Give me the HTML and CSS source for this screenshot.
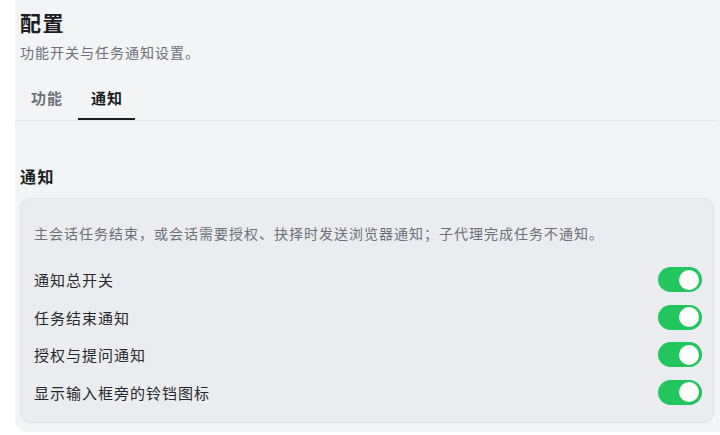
FILE: index.html
```html
<!DOCTYPE html>
<html lang="zh">
<head>
<meta charset="utf-8">
<link rel="stylesheet" href="styles.css">
</head>
<body>
<div class="panel">
  <h1 class="title">配置</h1>
  <p class="subtitle">功能开关与任务通知设置。</p>
  <div class="tabs">
    <div class="tab">功能</div>
    <div class="tab active">通知</div>
  </div>
  <h2 class="section">通知</h2>
  <div class="card">
    <p class="desc">主会话任务结束，或会话需要授权、抉择时发送浏览器通知；子代理完成任务不通知。</p>
    <div class="row"><span>通知总开关</span><span class="toggle on"><span class="knob"></span></span></div>
    <div class="row"><span>任务结束通知</span><span class="toggle on"><span class="knob"></span></span></div>
    <div class="row"><span>授权与提问通知</span><span class="toggle on"><span class="knob"></span></span></div>
    <div class="row"><span>显示输入框旁的铃铛图标</span><span class="toggle on"><span class="knob"></span></span></div>
  </div>
</div>
</body>
</html>
```

FILE: styles.css
```css
* { box-sizing: border-box; }
html, body { margin: 0; padding: 0; background: #ffffff; }
body {
  font-family: "Noto Sans CJK SC", "Noto Sans", sans-serif;
  color: #1f2329;
  width: 720px;
  height: 435px;
  overflow: hidden;
}
.panel {
  margin-left: 15px;
  width: 705px;
  height: 432px;
  background: #f3f4f6;
  border-radius: 0 0 0 12px;
  padding: 0 2px 0 5px;
  display: flex;
  flex-direction: column;
}
.title {
  margin: 8px 0 0;
  font-size: 21px;
  line-height: 28px;
  letter-spacing: 1.5px;
  font-weight: 700;
  color: #1a1d21;
}
.subtitle {
  margin: 6px 0 0;
  font-size: 14px;
  line-height: 20px;
  letter-spacing: 1px;
  color: #6b7078;
}
.tabs {
  margin: 23px 0 0 -5px;
  padding-left: 3px;
  display: flex;
  gap: 3px;
  border-bottom: 1px solid #e3e5e8;
}
.tab {
  padding: 0 12px 0 13px;
  height: 35px;
  line-height: 26px;
  font-size: 15px;
  letter-spacing: 1px;
  font-weight: 700;
  color: #6b7078;
  border-bottom: 2px solid transparent;
}
.tab.active {
  color: #1a1d21;
  border-bottom-color: #1a1d21;
}
.section {
  margin: 44px 0 0;
  font-size: 16px;
  line-height: 22px;
  letter-spacing: 1.5px;
  font-weight: 700;
  color: #1a1d21;
}
.card {
  margin: 11px 4px 0 0;
  background: #ebecf0;
  border: 1px solid #e0e2e6;
  border-radius: 10px;
  padding: 24px 11px 11px 13px;
}
.desc {
  margin: 0 0 18px;
  font-size: 14px;
  line-height: 20px;
  letter-spacing: 1px;
  color: #6b7078;
}
.row {
  display: flex;
  align-items: center;
  justify-content: space-between;
  height: 37.5px;
  font-size: 15px;
  letter-spacing: 1px;
  color: #25292e;
}
.toggle {
  width: 44px;
  height: 25px;
  border-radius: 13px;
  background: #22c55e;
  position: relative;
  display: inline-block;
}
.knob {
  position: absolute;
  top: 2.5px;
  right: 3px;
  width: 20px;
  height: 20px;
  border-radius: 50%;
  background: #ffffff;
}
```
